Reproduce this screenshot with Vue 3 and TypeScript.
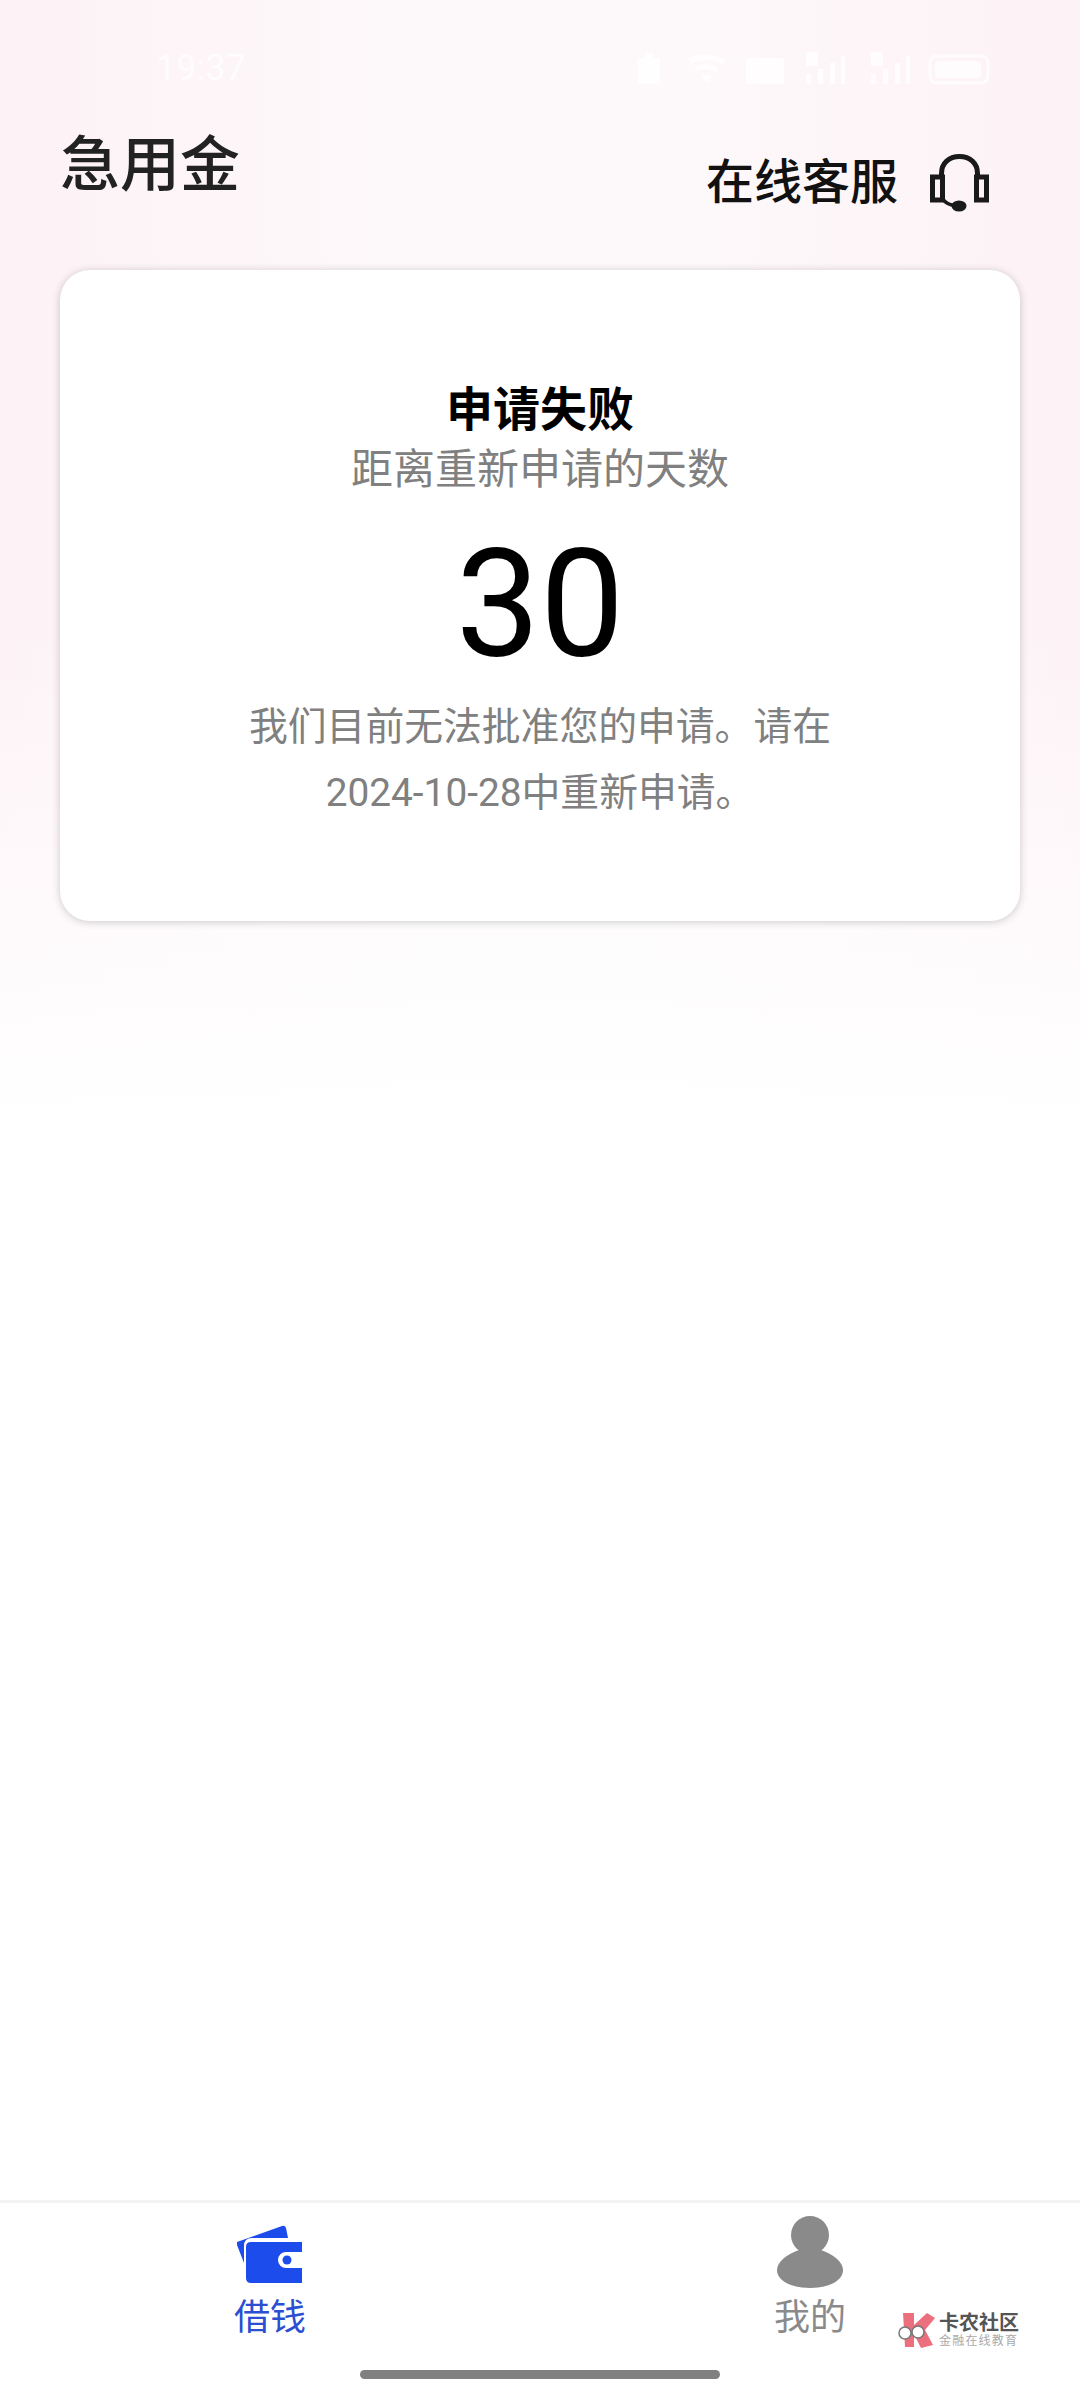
<script setup lang="ts">
const tabs = [
  { key: 'loan', label: '借钱', active: true },
  { key: 'mine', label: '我的', active: false },
]
</script>

<template>
  <div class="page">
    <div class="status">
      <span class="time">19:37</span>
      <svg class="status-icons" width="356" height="36" viewBox="0 0 356 36" fill="none">
        <g fill="#fff" fill-opacity="0.72">
          <path d="M2 8h7V3h8v5h7v26H2z" />
          <path d="M52 8q20-8 38 2l-3 4q-16-8-32 0zM58 17q13-6 25 1l-3 4q-9-5-19-1zM65 26q6-3 12 0l-6 7z" />
          <rect x="110" y="8" width="38" height="26" rx="2" />
          <rect x="170" y="24" width="5" height="10" />
          <rect x="182" y="19" width="5" height="15" />
          <rect x="194" y="13" width="5" height="21" />
          <rect x="205" y="6" width="4" height="28" />
          <rect x="170" y="2" width="12" height="14" />
          <rect x="235" y="24" width="5" height="10" />
          <rect x="247" y="19" width="5" height="15" />
          <rect x="259" y="13" width="5" height="21" />
          <rect x="270" y="6" width="4" height="28" />
          <rect x="235" y="2" width="12" height="14" />
        </g>
        <rect x="294" y="6" width="58" height="27" rx="7" stroke="#fff" stroke-opacity="0.72" stroke-width="3" />
        <rect x="299" y="11" width="46" height="17" rx="4" fill="#fff" fill-opacity="0.72" />
      </svg>
    </div>

    <header class="head">
      <h1 class="title">急用金</h1>
      <div class="service">
        <span>在线客服</span>
        <svg class="headset" width="60" height="58" viewBox="0 0 60 58" fill="none">
          <path d="M11.500 25V19.500C11.500 9 19 2.500 29.500 2.500S47.500 9 47.500 19.500V25" stroke="#1a1a1a" stroke-width="5" />
          <rect x="2.500" y="23" width="10" height="23" stroke="#1a1a1a" stroke-width="5" />
          <rect x="46.500" y="23" width="10" height="23" stroke="#1a1a1a" stroke-width="5" />
          <path d="M13 45c2 4 7 6 13 7" stroke="#1a1a1a" stroke-width="3.500" />
          <ellipse cx="29" cy="52" rx="7.500" ry="5.500" fill="#1a1a1a" />
        </svg>
      </div>
    </header>

    <section class="card">
      <h2 class="card-title">申请失败</h2>
      <p class="card-sub">距离重新申请的天数</p>
      <p class="days">30</p>
      <p class="note">我们目前无法批准您的申请。请在<br />2024-10-28中重新申请。</p>
    </section>

    <nav class="tabbar">
      <div v-for="tab in tabs" :key="tab.key" class="tab" :class="{ active: tab.active }">
        <svg v-if="tab.key === 'loan'" class="tab-icon wallet" width="66" height="58" viewBox="0 0 66 58">
          <path d="M0 17 45 1q3-1 4 2l2 10H15q-8 0-8 8v17L0 20q-1-2 0-3z" fill="#1d4ced" />
          <path d="M14 17h51v10H49a8 8 0 0 0 0 16h16v15H14q-5 0-5-5V22q0-5 5-5z" fill="#1d4ced" />
          <circle cx="50" cy="35" r="4.500" fill="#1d4ced" />
        </svg>
        <svg v-else class="tab-icon person" width="66" height="72" viewBox="0 0 66 72">
          <circle cx="33" cy="19" r="19" fill="#8a8a8a" />
          <path d="M22 34C10 38 0 46 0 54c0 11 15 18 33 18s33-7 33-18c0-8-10-16-22-20z" fill="#8a8a8a" />
        </svg>
        <span class="tab-label">{{ tab.label }}</span>
      </div>
    </nav>

    <div class="watermark">
      <svg width="38" height="36" viewBox="0 0 38 36">
        <path d="M5 1h11v12L29 1l8 5-10 12 8 15-12 3-7-14v13H7z" fill="#ec6f7e" />
        <circle cx="7" cy="21" r="6" fill="#fff" stroke="#777" stroke-width="1.500" />
        <circle cx="20" cy="20" r="6" fill="#fff" stroke="#777" stroke-width="1.500" />
      </svg>
      <div class="mark-text">
        <span class="mark-name">卡农社区</span>
        <span class="mark-sub">金融在线教育</span>
      </div>
    </div>

    <div class="home-bar"></div>
  </div>
</template>

<style scoped>
.page {
  position: relative;
  width: 1080px;
  height: 2400px;
  display: flex;
  flex-direction: column;
  overflow: hidden;
  font-family: Roboto, "Noto Sans CJK SC", sans-serif;
  background:
    linear-gradient(180deg, rgba(255, 255, 255, 0) 620px, #fff 1120px),
    linear-gradient(90deg, #fdf2f6 0, #fdf9fa 40%, #fdf9fa 60%, #fdf2f6 100%);
}

.status {
  height: 108px;
  padding: 48px 88px 0 156px;
  box-sizing: border-box;
  display: flex;
  justify-content: space-between;
  align-items: flex-start;
}

.time {
  font-size: 36px;
  line-height: 40px;
  color: rgba(255, 255, 255, 0.72);
}

.status-icons {
  margin-top: 2px;
}

.head {
  height: 162px;
  padding: 24px 60px 0 60px;
  box-sizing: border-box;
  display: flex;
  justify-content: space-between;
  align-items: flex-start;
}

.title {
  margin: 0;
  font-size: 60px;
  line-height: 68px;
  font-weight: 500;
  color: #222;
}

.service {
  display: flex;
  align-items: center;
  gap: 32px;
  margin-top: 16px;
  margin-right: 30px;
  font-size: 48px;
  line-height: 70px;
  font-weight: 500;
  color: #111;
}

.card {
  margin: 0 60px;
  height: 651px;
  padding-top: 112px;
  box-sizing: border-box;
  background: #fff;
  border-radius: 30px;
  box-shadow: 0 1px 8px rgba(0, 0, 0, 0.2);
  text-align: center;
}

.card-title {
  margin: 0;
  font-size: 47px;
  line-height: 56px;
  font-weight: 700;
  color: #000;
}

.card-sub {
  margin: 4px 0 0;
  font-size: 42px;
  line-height: 56px;
  color: #808080;
}

.days {
  margin: 19px 0 0;
  font-size: 150px;
  line-height: 176px;
  color: #000;
}

.note {
  margin: 1px 0 0;
  font-size: 38.800px;
  line-height: 66px;
  color: #808080;
}

.tabbar {
  margin-top: auto;
  height: 200px;
  box-sizing: border-box;
  border-top: 3px solid #f3f3f3;
  display: grid;
  grid-template-columns: 1fr 1fr;
}

.tab {
  height: 136px;
  display: flex;
  flex-direction: column;
  align-items: center;
  justify-content: flex-end;
  color: #8a8a8a;
}

.tab.active {
  color: #2b4fd0;
}

.wallet {
  margin-bottom: 14px;
}

.person {
  margin-bottom: 9px;
}

.tab-label {
  font-size: 36px;
  line-height: 42px;
}

.watermark {
  position: absolute;
  left: 898px;
  top: 2312px;
  display: flex;
  gap: 3px;
}

.mark-text {
  display: flex;
  flex-direction: column;
  align-items: flex-start;
}

.mark-name {
  font-size: 20px;
  line-height: 22px;
  font-weight: 700;
  color: #555;
}

.mark-sub {
  font-size: 12px;
  line-height: 14px;
  letter-spacing: 1.200px;
  color: #aaa;
}

.home-bar {
  position: absolute;
  left: 360px;
  top: 2370px;
  width: 360px;
  height: 9px;
  border-radius: 5px;
  background: #808080;
}
</style>
